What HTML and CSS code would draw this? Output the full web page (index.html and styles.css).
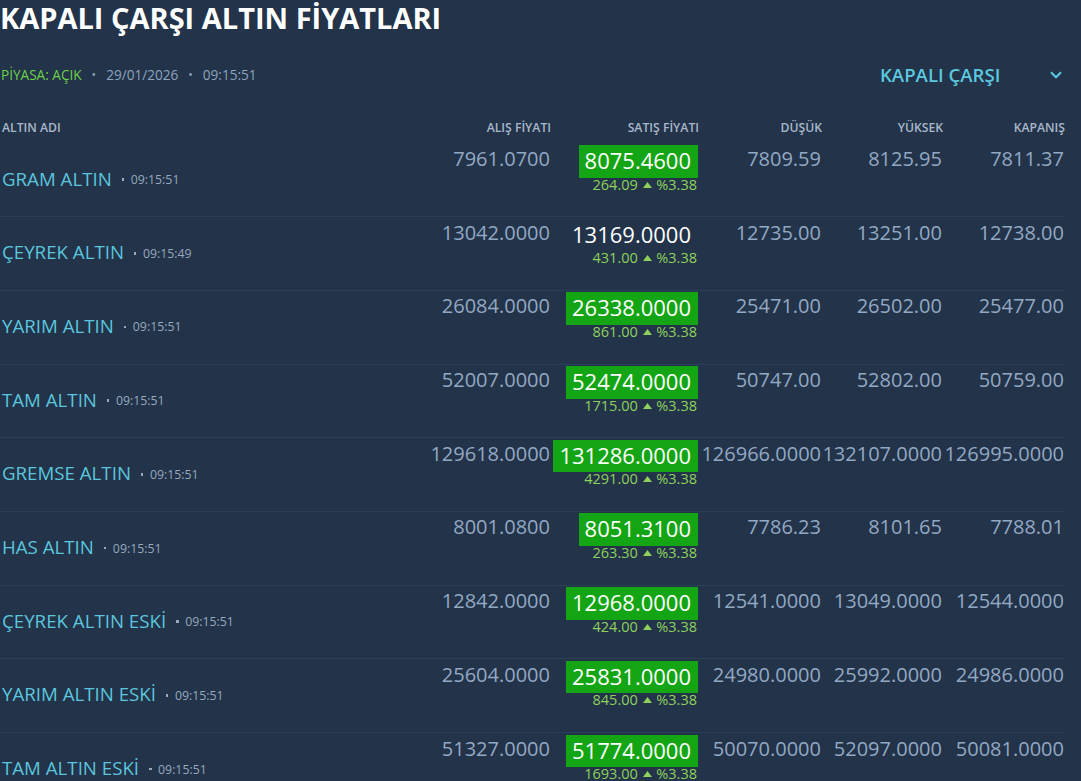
FILE: index.html
```html
<!DOCTYPE html>
<html lang="tr">
<head>
<meta charset="utf-8">
<title>Kapalı Çarşı Altın Fiyatları</title>
<link rel="stylesheet" href="styles.css">
</head>
<body>
<div class="page">
  <h1 class="title">KAPALI ÇARŞI ALTIN FİYATLARI</h1>
  <div class="toolbar">
    <div class="status">
      <span class="open">PİYASA: AÇIK</span>
      <span class="sep">•</span>
      <span>29/01/2026</span>
      <span class="sep">•</span>
      <span>09:15:51</span>
    </div>
    <div class="market-select">
      <span>KAPALI ÇARŞI</span>
      <svg class="chev" width="12" height="8" viewBox="0 0 12 8"><path d="M1 1.2 L6 6.2 L11 1.2" fill="none" stroke="#5cc8df" stroke-width="2.2"/></svg>
    </div>
  </div>

  <div class="table">
    <div class="row head">
      <div class="c name">ALTIN ADI</div>
      <div class="c num">ALIŞ FİYATI</div>
      <div class="c num sale-h">SATIŞ FİYATI</div>
      <div class="c num">DÜŞÜK</div>
      <div class="c num">YÜKSEK</div>
      <div class="c num">KAPANIŞ</div>
    </div>

    <div class="row item">
      <div class="c name"><span class="n">GRAM ALTIN</span><span class="t"><i class="dot"></i>09:15:51</span></div>
      <div class="c num v">7961.0700</div>
      <div class="c sale"><span class="box up">8075.4600</span><span class="chg">264.09 <svg class="tri" width="9" height="6" viewBox="0 0 9 6"><path d="M0 6 L4.5 0 L9 6Z" fill="#8fd15a"/></svg> %3.38</span></div>
      <div class="c num v">7809.59</div>
      <div class="c num v">8125.95</div>
      <div class="c num v">7811.37</div>
    </div>

    <div class="row item">
      <div class="c name"><span class="n">ÇEYREK ALTIN</span><span class="t"><i class="dot"></i>09:15:49</span></div>
      <div class="c num v">13042.0000</div>
      <div class="c sale"><span class="box">13169.0000</span><span class="chg">431.00 <svg class="tri" width="9" height="6" viewBox="0 0 9 6"><path d="M0 6 L4.5 0 L9 6Z" fill="#8fd15a"/></svg> %3.38</span></div>
      <div class="c num v">12735.00</div>
      <div class="c num v">13251.00</div>
      <div class="c num v">12738.00</div>
    </div>

    <div class="row item">
      <div class="c name"><span class="n">YARIM ALTIN</span><span class="t"><i class="dot"></i>09:15:51</span></div>
      <div class="c num v">26084.0000</div>
      <div class="c sale"><span class="box up">26338.0000</span><span class="chg">861.00 <svg class="tri" width="9" height="6" viewBox="0 0 9 6"><path d="M0 6 L4.5 0 L9 6Z" fill="#8fd15a"/></svg> %3.38</span></div>
      <div class="c num v">25471.00</div>
      <div class="c num v">26502.00</div>
      <div class="c num v">25477.00</div>
    </div>

    <div class="row item">
      <div class="c name"><span class="n">TAM ALTIN</span><span class="t"><i class="dot"></i>09:15:51</span></div>
      <div class="c num v">52007.0000</div>
      <div class="c sale"><span class="box up">52474.0000</span><span class="chg">1715.00 <svg class="tri" width="9" height="6" viewBox="0 0 9 6"><path d="M0 6 L4.5 0 L9 6Z" fill="#8fd15a"/></svg> %3.38</span></div>
      <div class="c num v">50747.00</div>
      <div class="c num v">52802.00</div>
      <div class="c num v">50759.00</div>
    </div>

    <div class="row item">
      <div class="c name"><span class="n">GREMSE ALTIN</span><span class="t"><i class="dot"></i>09:15:51</span></div>
      <div class="c num v">129618.0000</div>
      <div class="c sale"><span class="box up">131286.0000</span><span class="chg">4291.00 <svg class="tri" width="9" height="6" viewBox="0 0 9 6"><path d="M0 6 L4.5 0 L9 6Z" fill="#8fd15a"/></svg> %3.38</span></div>
      <div class="c num v">126966.0000</div>
      <div class="c num v">132107.0000</div>
      <div class="c num v">126995.0000</div>
    </div>

    <div class="row item">
      <div class="c name"><span class="n">HAS ALTIN</span><span class="t"><i class="dot"></i>09:15:51</span></div>
      <div class="c num v">8001.0800</div>
      <div class="c sale"><span class="box up">8051.3100</span><span class="chg">263.30 <svg class="tri" width="9" height="6" viewBox="0 0 9 6"><path d="M0 6 L4.5 0 L9 6Z" fill="#8fd15a"/></svg> %3.38</span></div>
      <div class="c num v">7786.23</div>
      <div class="c num v">8101.65</div>
      <div class="c num v">7788.01</div>
    </div>

    <div class="row item">
      <div class="c name"><span class="n">ÇEYREK ALTIN ESKİ</span><span class="t"><i class="dot"></i>09:15:51</span></div>
      <div class="c num v">12842.0000</div>
      <div class="c sale"><span class="box up">12968.0000</span><span class="chg">424.00 <svg class="tri" width="9" height="6" viewBox="0 0 9 6"><path d="M0 6 L4.5 0 L9 6Z" fill="#8fd15a"/></svg> %3.38</span></div>
      <div class="c num v">12541.0000</div>
      <div class="c num v">13049.0000</div>
      <div class="c num v">12544.0000</div>
    </div>

    <div class="row item">
      <div class="c name"><span class="n">YARIM ALTIN ESKİ</span><span class="t"><i class="dot"></i>09:15:51</span></div>
      <div class="c num v">25604.0000</div>
      <div class="c sale"><span class="box up">25831.0000</span><span class="chg">845.00 <svg class="tri" width="9" height="6" viewBox="0 0 9 6"><path d="M0 6 L4.5 0 L9 6Z" fill="#8fd15a"/></svg> %3.38</span></div>
      <div class="c num v">24980.0000</div>
      <div class="c num v">25992.0000</div>
      <div class="c num v">24986.0000</div>
    </div>

    <div class="row item">
      <div class="c name"><span class="n">TAM ALTIN ESKİ</span><span class="t"><i class="dot"></i>09:15:51</span></div>
      <div class="c num v">51327.0000</div>
      <div class="c sale"><span class="box up">51774.0000</span><span class="chg">1693.00 <svg class="tri" width="9" height="6" viewBox="0 0 9 6"><path d="M0 6 L4.5 0 L9 6Z" fill="#8fd15a"/></svg> %3.38</span></div>
      <div class="c num v">50070.0000</div>
      <div class="c num v">52097.0000</div>
      <div class="c num v">50081.0000</div>
    </div>
  </div>
</div>
</body>
</html>
```

FILE: styles.css
```css
html, body {
  margin: 0;
  padding: 0;
  background: #22334a;
  height: 100%;
  overflow: hidden;
}
body {
  font-family: "Open Sans", "Noto Sans", sans-serif;
  color: #93a8c3;
}
.page {
  width: 1065px;
}
.title {
  margin: 0;
  font-size: 29px;
  line-height: 36px;
  font-weight: 700;
  color: #ffffff;
  letter-spacing: 0;
}
.toolbar {
  margin-top: 20px;
  height: 36px;
  display: flex;
  align-items: center;
  justify-content: space-between;
}
.status {
  display: flex;
  align-items: center;
  font-size: 13.6px;
  color: #8ea4bf;
  padding-left: 1px;
}
.status .open {
  color: #6fd14a;
}
.status .sep {
  margin: 0 10px;
  color: #8ea4bf;
  font-size: 12px;
}
.market-select {
  width: 182px;
  margin-right: 3px;
  display: flex;
  align-items: center;
  justify-content: space-between;
  font-size: 18.6px;
  font-weight: 600;
  color: #5cc8df;
}
.market-select .chev {
  display: block;
  margin-top: 1px;
}
.table {
  margin-top: 19px;
}
.row {
  display: grid;
  grid-template-columns: 430px 121px 148px 123px 121px 122px;
}
.head {
  height: 32.5px;
  align-items: center;
  font-size: 12.2px;
  font-weight: 600;
  color: #a9b7c9;
}
.c.name {
  padding-left: 2px;
}
.c.num {
  text-align: right;
  padding-right: 1px;
}
.head .c.num {
  padding-right: 0;
}
.item {
  box-sizing: border-box;
  height: 73.7px;
  border-bottom: 1px solid #2c3e57;
  padding-top: 1.5px;
  align-items: start;
}
.item .name {
  align-self: center;
  display: flex;
  align-items: center;
  margin-top: -4px;
}
.item .n {
  font-size: 18.7px;
  color: #5cc6dc;
  line-height: 24px;
}
.item .t {
  display: flex;
  align-items: center;
  font-size: 12.3px;
  color: #97a9be;
  margin-left: 10px;
  margin-top: 2px;
}
.dot {
  display: inline-block;
  width: 2.5px;
  height: 2.5px;
  background: #97a9be;
  margin-right: 6.5px;
}
.v {
  font-size: 20px;
  line-height: 28px;
}
.sale {
  display: flex;
  flex-direction: column;
  align-items: flex-end;
  padding-right: 1px;
}
.box {
  font-size: 22px;
  line-height: 30px;
  padding: 0 7px 2.5px 6px;
  color: #ffffff;
}
.box.up {
  background: #13a513;
}
.chg {
  font-size: 14.5px;
  line-height: 14px;
  color: #8fd15a;
  padding-right: 1px;
  display: flex;
  align-items: center;
  white-space: pre;
}
.tri {
  display: block;
  margin: 0 1px;
}
```
